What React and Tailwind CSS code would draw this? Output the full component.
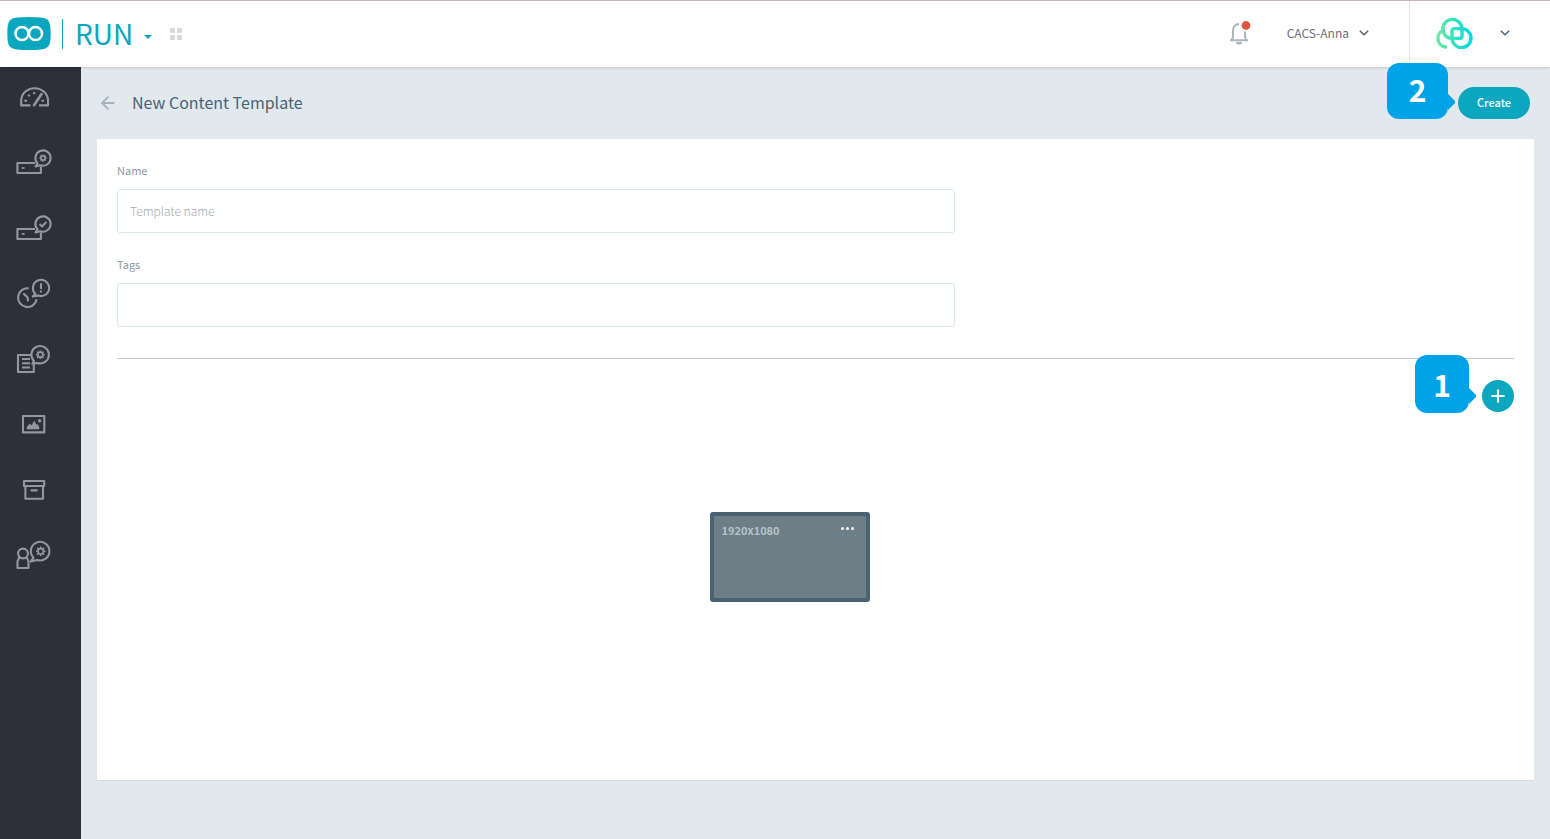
import { ArrowLeft, Plus } from 'lucide-react';

function Gear({ x, y, r }) {
  const angles = [0, 45, 90, 135, 180, 225, 270, 315];
  return (
    <g transform={`translate(${x} ${y})`}>
      <circle r={r * 0.7} strokeWidth="1.6" />
      {angles.map((a) => (
        <path key={a} d={`M0 ${-r * 0.8}V${-r * 1.25}`} strokeWidth="1.7" transform={`rotate(${a})`} />
      ))}
    </g>
  );
}

function NavSvg({ children }) {
  return (
    <svg
      viewBox="0 0 36 32"
      className="h-8 w-9"
      fill="none"
      stroke="currentColor"
      strokeWidth="2.1"
      strokeLinejoin="round"
      aria-hidden="true"
    >
      {children}
    </svg>
  );
}

function PlayerBox() {
  return (
    <>
      <path d="M19 17H1.4v10h23.5v-6.5" />
      <path d="M5.8 22h2.8" strokeWidth="1.8" />
      <path d="M21.6 17.4A7.6 7.6 0 1 1 24.4 19.2L19.6 20.4z" />
    </>
  );
}

function Chevron() {
  return (
    <svg viewBox="0 0 10 6" className="h-1.5 w-2.5 text-[#4a6272]" fill="none" stroke="currentColor" strokeWidth="1.4" aria-hidden="true">
      <path d="M0.8 0.8L5 4.8L9.2 0.8" />
    </svg>
  );
}

const navItems = [
  {
    label: 'Dashboard',
    icon: (
      <>
        <path d="M14.5 24.4H5.2V19.6a13.4 12.4 0 0 1 26.8 0v4.8H23" />
        <path d="M18 24.2L25.6 13" strokeWidth="2.6" strokeLinecap="round" />
        <path d="M8.4 19.8h2.6M25.4 19.8H28M12.2 13.8l1.6 1.6M18.2 11v2.2" strokeWidth="2" />
      </>
    ),
  },
  {
    label: 'Player settings',
    icon: (
      <>
        <PlayerBox />
        <Gear x={27} y={12} r={2.9} />
      </>
    ),
  },
  {
    label: 'Player status',
    icon: (
      <>
        <PlayerBox />
        <path d="M23.5 12l2.7 2.5 4.2-4.6" />
      </>
    ),
  },
  {
    label: 'Alerts',
    icon: (
      <>
        <path d="M12.6 11.3A9.4 9.4 0 1 0 20.7 22.3" />
        <path d="M7.3 16.5l4.1 3.6.8 4.2" />
        <path d="M19.4 16.8A8.1 8.1 0 1 1 22.3 18.6L16.8 19.4z" />
        <path d="M25 6.3v5.6M25 13.6v2" />
      </>
    ),
  },
  {
    label: 'Content settings',
    icon: (
      <>
        <path d="M15 12H2v17h15.8V21" />
        <path d="M6 16h8M6 20.3h8M6 24.5h8" />
        <path d="M18 17.9A8.7 8.7 0 1 1 21.4 20L16.4 20.6z" />
        <Gear x={24.3} y={11.7} r={3.5} />
      </>
    ),
  },
  {
    label: 'Media',
    icon: (
      <>
        <path d="M7 8h21.3v16.4H7z" />
        <path d="M11 21v-1.6l2.6-3.6 2 2 2.6-4.6 2.2 4 1-1 1.6 3v1.8z" fill="currentColor" strokeWidth="0.6" />
        <circle cx="23.6" cy="12.8" r="1.7" fill="currentColor" stroke="none" />
      </>
    ),
  },
  {
    label: 'Archive',
    icon: (
      <>
        <path d="M8 7h20.2v5H8zM9.4 12v12.7h17.6V12" />
        <path d="M15.4 16.4h5.4" strokeLinecap="round" />
      </>
    ),
  },
  {
    label: 'Users',
    icon: (
      <>
        <circle cx="7" cy="14.5" r="4.9" />
        <path d="M3.4 18.2L1.5 22.4v6.6h11v-6.6l-1.9-4.2" />
        <path d="M17.4 18.6A9.3 9.3 0 1 1 21.2 21L14.8 22.6z" />
        <Gear x={24.7} y={12.3} r={3.8} />
      </>
    ),
  },
];

function Callout({ children, className }) {
  return (
    <span
      className={`pointer-events-none absolute z-20 flex items-center justify-center rounded-xl bg-[#00a2e8] text-3xl font-bold text-white ${className}`}
    >
      {children}
      <svg viewBox="0 0 7 16" className="absolute bottom-[9px] left-full h-4 w-[7px]" fill="#00a2e8" aria-hidden="true">
        <path d="M0 0L7 7V9L0 16z" />
      </svg>
    </span>
  );
}

function Header() {
  return (
    <header className="relative z-10 flex h-[67px] items-center border-t border-[#cfb1bb] bg-white pl-[7px] shadow-sm">
      <a href="#home" aria-label="Home" className="pb-0.5">
        <svg viewBox="0 0 44 33" className="h-[33px] w-11" fill="none" aria-hidden="true">
          <path
            d="M10 .6Q22-.6 34 .6Q42.600 1 43.300 9Q44 16.500 43.300 24Q42.600 32 34 32.400Q22 33.600 10 32.400Q1.400 32 .7 24Q0 16.500 .7 9Q1.400 1 10 .6z"
            fill="#0ba7bf"
          />
          <circle cx="15" cy="16.5" r="6.5" stroke="white" strokeWidth="2.5" />
          <circle cx="28.5" cy="16.5" r="6.5" stroke="white" strokeWidth="2.5" />
        </svg>
      </a>
      <span className="ml-[11px] h-[30px] w-px bg-[#0ba7bf]" />
      <button type="button" className="ml-3 flex items-center gap-[11px] pb-0.5 text-[28px] leading-8 text-[#0ba7bf]">
        RUN
        <svg viewBox="0 0 8 4" className="mt-2 h-1 w-2" fill="currentColor" aria-hidden="true">
          <path d="M0 0h8L4 4z" />
        </svg>
      </button>
      <button type="button" aria-label="Apps" className="ml-[18px] grid grid-cols-2 gap-0.5">
        <span className="size-[5px] rounded-[1px] bg-[#d8d8d8]" />
        <span className="size-[5px] rounded-[1px] bg-[#d8d8d8]" />
        <span className="size-[5px] rounded-[1px] bg-[#d8d8d8]" />
        <span className="size-[5px] rounded-[1px] bg-[#d8d8d8]" />
      </button>
      <div className="ml-auto flex items-center self-stretch">
        <button type="button" aria-label="Notifications" className="mr-9 pb-0.5">
          <svg viewBox="0 0 22 24" className="h-6 w-[22px]" fill="none" aria-hidden="true">
            <path
              d="M10 3C6.300 3.200 4 5.700 4 9v6.200c0 1.600-.6 3-1.600 4M16 10.500v4.700c0 1.600.6 3 1.600 4M1 19.300h18"
              stroke="#a9b6bc"
              strokeWidth="2"
            />
            <path d="M7 21h6a3 2.600 0 0 1-6 0z" fill="#a9b6bc" />
            <circle cx="17" cy="4.5" r="4.4" fill="#dd5546" />
          </svg>
        </button>
        <button type="button" className="mr-10 flex items-center gap-2.5 pb-0.5 text-xs text-[#6b7075]">
          CACS-Anna
          <Chevron />
        </button>
        <button type="button" aria-label="Account" className="flex items-center gap-[27px] self-stretch border-l border-[#dce6ec] pr-10 pb-0.5 pl-[25px]">
          <svg viewBox="0 0 38 32" className="h-8 w-[38px]" fill="none" strokeWidth="3.4" aria-hidden="true">
            <defs>
              <linearGradient id="brand" gradientUnits="userSpaceOnUse" x1="2" y1="0" x2="36" y2="0">
                <stop offset="0" stopColor="#6fe8a4" />
                <stop offset="0.5" stopColor="#35e2bf" />
                <stop offset="1" stopColor="#00d8e4" />
              </linearGradient>
            </defs>
            <g stroke="url(#brand)">
              <path d="M10.6 30A8.7 8.7 0 0 1 8.6 13.2" strokeLinecap="round" />
              <path d="M17.6 21.6A9.6 9.6 0 1 1 27 12.6V19a2.4 2.4 0 0 1-2.4 2.4H19.4A2.4 2.4 0 0 1 17 19V14a2.4 2.4 0 0 1 2.400-2.400H26.500a9.500 9.500 0 1 1-9.500 9.600V18" />
            </g>
          </svg>
          <Chevron />
        </button>
      </div>
    </header>
  );
}

function Sidebar() {
  return (
    <nav aria-label="Main" className="w-[81px] shrink-0 bg-[#2d2f3b] pt-3.5 pl-4">
      <ul className="flex h-[490px] flex-col justify-between text-[#95979e]">
        {navItems.map((item) => (
          <li key={item.label}>
            <a href="#nav" aria-label={item.label} className="block w-9">
              <NavSvg>{item.icon}</NavSvg>
            </a>
          </li>
        ))}
      </ul>
    </nav>
  );
}

export default function App() {
  return (
    <div className="flex min-h-screen flex-col bg-[#e1e9ef] font-['Noto_Sans_CJK_SC',sans-serif]">
      <Header />
      <div className="flex flex-1">
        <Sidebar />
        <main className="min-w-0 flex-1 px-4 pt-5">
          <div className="flex h-8 items-center pr-1 pl-px">
            <button type="button" aria-label="Back" className="text-[#a5b4bb]">
              <ArrowLeft className="size-5" strokeWidth={2.2} />
            </button>
            <h1 className="ml-3.5 pb-0.5 text-base text-[#4a6272]">New Content Template</h1>
            <div className="relative ml-auto">
              <button type="button" className="h-8 w-[72px] rounded-full bg-[#0ba7bf] pb-0.5 text-[11px] font-medium text-white">
                Create
              </button>
              <Callout className="right-full bottom-0 mr-2.5 h-14 w-[61px] pb-1">2</Callout>
            </div>
          </div>

          <section className="mt-5 border-b border-[#d0dce2] bg-white px-5 pt-[23px] pb-[46px]">
            <div className="flex w-3/5 flex-col gap-[23px]">
              <div>
                <label htmlFor="name" className="block text-[11px] leading-4 text-[#8b9ba3]">
                  Name
                </label>
                <input
                  id="name"
                  placeholder="Template name"
                  className="mt-[11px] block h-11 w-full rounded-[3px] border border-[#dbe8ee] px-3 pb-0.5 text-xs font-light text-[#4a6272] placeholder:text-[#9fabb2]"
                />
              </div>
              <div>
                <label htmlFor="tags" className="block text-[11px] leading-4 text-[#8b9ba3]">
                  Tags
                </label>
                <input
                  id="tags"
                  className="mt-[11px] block h-11 w-full rounded-[3px] border border-[#dbe8ee] px-3 pb-0.5 text-xs text-[#4a6272]"
                />
              </div>
            </div>
            <hr className="mt-[31px] border-[#c8c8c8]" />
            <div className="mt-[21px] flex items-start gap-5">
              <div className="flex h-[354px] flex-1 items-center justify-center">
                <div className="flex h-[90px] w-40 items-start justify-between rounded-[3px] border-4 border-[#4a6272] bg-[#6e7e86] px-2 pt-1.5">
                  <span className="text-[11px] leading-4 font-bold text-[#b5c3ca]">1920x1080</span>
                  <button type="button" aria-label="Layout options" className="mr-1 flex h-3 items-center gap-0.5">
                    <span className="size-[3px] rounded-full bg-white" />
                    <span className="size-[3px] rounded-full bg-white" />
                    <span className="size-[3px] rounded-full bg-white" />
                  </button>
                </div>
              </div>
              <div className="relative">
                <button
                  type="button"
                  aria-label="Add"
                  className="flex size-8 items-center justify-center rounded-full bg-[#0ba7bf] text-white"
                >
                  <Plus className="size-5" strokeWidth={2.5} />
                </button>
                <Callout className="right-full -bottom-px mr-[13px] h-[58px] w-[54px]">1</Callout>
              </div>
            </div>
          </section>
        </main>
      </div>
    </div>
  );
}
